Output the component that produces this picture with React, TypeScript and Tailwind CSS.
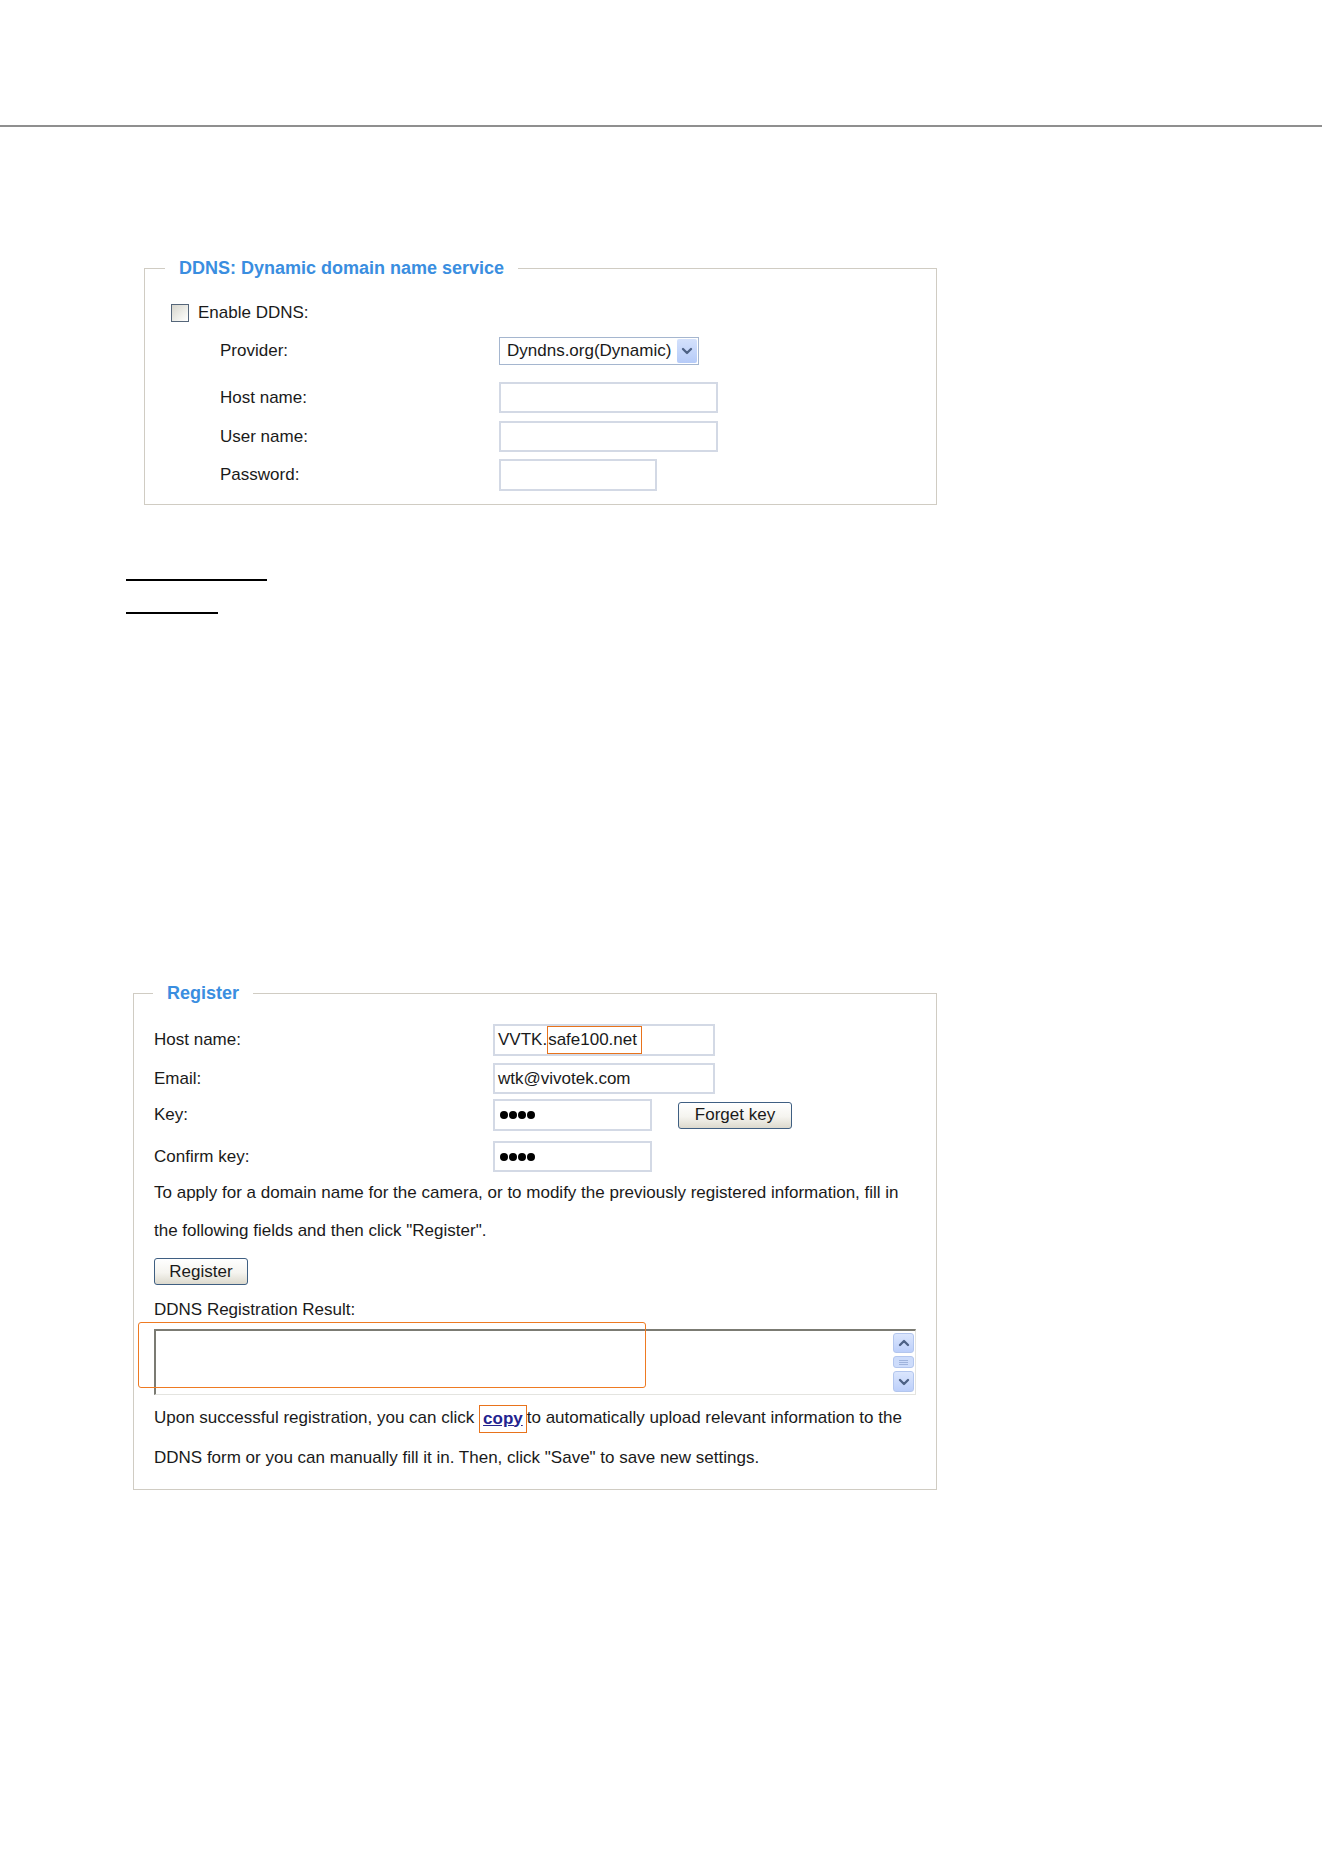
import { ChevronDown, ChevronUp } from "lucide-react";

const btn =
  "flex h-[27px] items-center justify-center rounded-[3px] border border-[#3f5f82] bg-[linear-gradient(180deg,#ffffff_0%,#f5f4ef_55%,#dcd9cd_100%)] text-[17px] text-[#1a1a1a]";
const field = "flex items-center border-2 border-[#d3d9e5] bg-white text-[17px]";
const sbBtn =
  "flex items-center justify-center rounded-[3px] border border-[#b3c6ee] bg-[linear-gradient(180deg,#dbe6fd_0%,#bccffa_100%)]";

function Dots() {
  return (
    <div className="flex gap-[1px] pl-[5px]">
      {[0, 1, 2, 3].map((i) => (
        <span key={i} className="size-[8px] rounded-full bg-black" />
      ))}
    </div>
  );
}

function Row({ label, pl, labelW, className, children }: { label: string; pl: string; labelW: string; className: string; children: React.ReactNode }) {
  return (
    <div className={`flex items-center ${pl} ${className}`}>
      <span className={`${labelW} shrink-0`}>{label}</span>
      {children}
    </div>
  );
}

export default function App() {
  return (
    <div className="min-h-[1872px] bg-white font-['Liberation_Sans',Arial,sans-serif] text-[17px] text-[#1a1a1a]">
      <div className="mr-[2px] h-[127px] border-b-2 border-[#8f8f8f]" />

      {/* DDNS settings */}
      <fieldset className="ml-[144px] mt-[130px] w-[793px] border border-[#d0ccc3] p-0">
        <legend className="ml-[20px] px-[14px] text-[18px] font-bold leading-[22px] text-[#3a8ee0]">
          DDNS: Dynamic domain name service
        </legend>
        <div className="pt-[19px] pb-[13px]">
          <div className="flex h-[30px] items-center pl-[26px]">
            <span className="size-[18px] border border-[#55667a] bg-[linear-gradient(135deg,#d6d5cc_0%,#f4f4f0_70%,#ffffff_100%)]" />
            <span className="ml-[9px]">Enable DDNS:</span>
          </div>
          <Row label="Provider:" pl="pl-[75px]" labelW="w-[279px]" className="mt-[9px] h-[28px]">
            <div className="flex h-[28px] w-[200px] items-center justify-between border border-[#a5b6cf] pl-[7px] pr-[1px]">
              <span>Dyndns.org(Dynamic)</span>
              <span className="flex h-[24px] w-[20px] items-center justify-center rounded-[2px] bg-[linear-gradient(180deg,#d4e1fc_0%,#b6cbf8_100%)]">
                <ChevronDown size={16} strokeWidth={3.5} className="text-[#4d6185]" />
              </span>
            </div>
          </Row>
          <Row label="Host name:" pl="pl-[75px]" labelW="w-[279px]" className="mt-[17px] h-[31px]">
            <div className={`${field} h-[31px] w-[219px]`} />
          </Row>
          <Row label="User name:" pl="pl-[75px]" labelW="w-[279px]" className="mt-[8px] h-[31px]">
            <div className={`${field} h-[31px] w-[219px]`} />
          </Row>
          <Row label="Password:" pl="pl-[75px]" labelW="w-[279px]" className="mt-[7px] h-[32px]">
            <div className={`${field} h-[32px] w-[158px]`} />
          </Row>
        </div>
      </fieldset>

      <div className="ml-[126px] mt-[74px] h-[2px] w-[141px] bg-black" />
      <div className="ml-[126px] mt-[31px] h-[2px] w-[92px] bg-black" />

      {/* Register */}
      <fieldset className="ml-[133px] mt-[368px] w-[804px] border border-[#d0ccc3] p-0">
        <legend className="ml-[19px] px-[14px] text-[18px] font-bold leading-[22px] text-[#3a8ee0]">Register</legend>
        <div className="pl-[20px] pt-[20px] pb-[11px]">
          <Row label="Host name:" pl="" labelW="w-[339px]" className="h-[32px]">
            <div className={`${field} h-[32px] w-[222px] pl-[3px]`}>
              <span>VVTK.</span>
              <span className="h-[28px] border border-[#e8731c] pr-[4px] leading-[26px]">safe100.net</span>
            </div>
          </Row>
          <Row label="Email:" pl="" labelW="w-[339px]" className="mt-[7px] h-[31px]">
            <div className={`${field} h-[31px] w-[222px] pl-[3px]`}>wtk@vivotek.com</div>
          </Row>
          <Row label="Key:" pl="" labelW="w-[339px]" className="mt-[5px] h-[32px]">
            <div className={`${field} h-[32px] w-[159px]`}>
              <Dots />
            </div>
            <button className={`${btn} ml-[26px] w-[114px]`}>Forget key</button>
          </Row>
          <Row label="Confirm key:" pl="" labelW="w-[339px]" className="mt-[10px] h-[31px]">
            <div className={`${field} h-[31px] w-[159px]`}>
              <Dots />
            </div>
          </Row>
          <p className="mt-[2px] whitespace-nowrap leading-[38px]">
            To apply for a domain name for the camera, or to modify the previously registered information, fill in
            <br />
            the following fields and then click "Register".
          </p>
          <button className={`${btn} mt-[8px] w-[94px]`}>Register</button>
          <p className="mt-[12px] leading-[26px]">DDNS Registration Result:</p>
          <div className="relative mt-[6px] w-[762px]">
            <div className="flex h-[66px] justify-end border-t-2 border-l-2 border-r border-b border-t-[#7b7b73] border-l-[#7b7b73] border-r-[#e4e4e0] border-b-[#e4e4e0] pr-[1px]">
              <div className="flex w-[21px] flex-col gap-[3px] pt-[2px]">
                <span className={`${sbBtn} h-[20px]`}>
                  <ChevronUp size={16} strokeWidth={3.5} className="text-[#4d6185]" />
                </span>
                <span className="flex h-[12px] flex-col items-center justify-center gap-[1px] rounded-[3px] border border-[#b3c6ee] bg-[#cddcfb]">
                  <span className="h-px w-[9px] bg-[#9fb3dc]" />
                  <span className="h-px w-[9px] bg-[#9fb3dc]" />
                  <span className="h-px w-[9px] bg-[#9fb3dc]" />
                </span>
                <span className={`${sbBtn} h-[21px]`}>
                  <ChevronDown size={16} strokeWidth={3.5} className="text-[#4d6185]" />
                </span>
              </div>
            </div>
            <div className="absolute -left-[16px] -top-[7px] h-[66px] w-[508px] rounded-[3px] border-[1.5px] border-[#ee7a22]" />
          </div>
          <p className="mt-[3px] whitespace-nowrap leading-[40px]">
            Upon successful registration, you can click{" "}
            <span className="inline-block h-[28px] border-[1.5px] border-[#e8731c] px-[3px] align-middle leading-[25px]">
              <a className="font-bold text-[#23238f] underline">copy</a>
            </span>
            to automatically upload relevant information to the
            <br />
            DDNS form or you can manually fill it in. Then, click "Save" to save new settings.
          </p>
        </div>
      </fieldset>
    </div>
  );
}
